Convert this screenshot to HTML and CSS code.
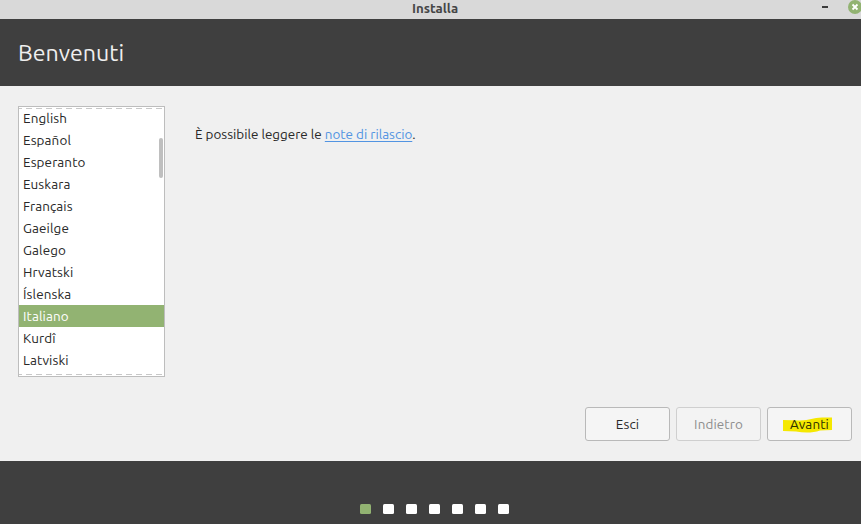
FILE: index.html
```html
<!DOCTYPE html>
<html lang="it">
<head>
<meta charset="utf-8">
<title>Installa</title>
<link rel="stylesheet" href="styles.css">
</head>
<body>
<div class="window">
  <div class="titlebar">
    <span class="title">Installa</span>
    <svg class="controls" width="44" height="19" viewBox="0 0 44 19">
      <rect x="5" y="6" width="6" height="2" fill="#3c3c3c"/>
      <circle cx="38" cy="7" r="7" fill="#92b372"/>
      <path d="M35.5 4.5l5 5M40.5 4.5l-5 5" stroke="#fff" stroke-width="1.8"/>
    </svg>
  </div>
  <header class="header"><h1><span>Benvenuti</span></h1></header>
  <main class="content">
    <div class="row">
      <div class="list">
        <ul>
          <li><span>English</span></li>
          <li><span>Español</span></li>
          <li><span>Esperanto</span></li>
          <li><span>Euskara</span></li>
          <li><span>Français</span></li>
          <li><span>Gaeilge</span></li>
          <li><span>Galego</span></li>
          <li><span>Hrvatski</span></li>
          <li><span>Íslenska</span></li>
          <li class="selected"><span>Italiano</span></li>
          <li><span>Kurdî</span></li>
          <li><span>Latviski</span></li>
        </ul>
        <i class="undershoot top"></i>
        <i class="undershoot bottom"></i>
        <i class="scrollbar"></i>
      </div>
      <p class="notes">È possibile leggere le <a href="#">note di rilascio</a>.</p>
    </div>
    <div class="actions">
      <button>Esci</button>
      <button disabled>Indietro</button>
      <button class="next">
        <svg class="marker" width="50" height="17" viewBox="0 0 50 17"><path d="M1 3L18 3.5C28 3.5 31 0.5 40 0.5H50V13L38 13.5C31 16 22 16 14 14.5L1 14Z" fill="#f5e800"/></svg>
        <span>Avanti</span>
      </button>
    </div>
  </main>
  <footer class="footer">
    <i class="dot current"></i><i class="dot"></i><i class="dot"></i><i class="dot"></i><i class="dot"></i><i class="dot"></i><i class="dot"></i>
  </footer>
</div>
</body>
</html>
```

FILE: styles.css
```css
* { box-sizing: border-box; }
body {
  margin: 0;
  font: 13.45px/22px "Ubuntu", "Noto Sans", sans-serif;
  color: #282828;
  background: #f0f0f0;
}
.window { width: 861px; height: 524px; display: flex; flex-direction: column; overflow: hidden; }
.titlebar {
  position: relative;
  flex: 0 0 19px;
  display: flex;
  justify-content: center;
  padding-left: 9px;
  background: #d9d9d9;
}
.title { font-size: 13.3px; font-weight: 600; line-height: 17px; color: #464646; }
.controls { position: absolute; right: 0; top: 0; }
.header {
  flex: 0 0 67px;
  display: flex;
  align-items: center;
  padding: 0 0 2px 18px;
  background: #3f3f3f;
}
h1 { margin: 0; font-size: 23.2px; line-height: 30px; font-weight: 400; color: #efefef; }
.content { flex: 0 0 375px; padding: 20px 9px 20px 18px; display: flex; flex-direction: column; justify-content: space-between; }
.row { display: flex; gap: 30px; }
.list {
  position: relative;
  width: 147px;
  height: 271px;
  border: 1px solid #bdbdbd;
  background: #fff;
}
ul { margin: 0; padding: 0; list-style: none; }
li { height: 22px; padding-left: 4px; letter-spacing: 0.12px; }
.selected { background: #92b372; color: #fff; }
.undershoot {
  position: absolute;
  left: 0;
  right: 0;
  height: 1px;
  background: repeating-linear-gradient(to right, #c8c8c8 0 3px, transparent 3px 7px, #c8c8c8 7px 10px);
}
.top { top: 1px; }
.bottom { bottom: 1px; }
.scrollbar { position: absolute; right: 1px; top: 31px; width: 4px; height: 40px; border-radius: 2px; background: #bfbfbf; }
.notes { margin: 17px 0 0; }
.notes a { color: #5294e2; text-underline-offset: 2px; }
.actions { display: flex; justify-content: flex-end; gap: 6px; }
button {
  position: relative;
  width: 85px;
  height: 34px;
  padding: 0;
  border: 1px solid #b9b9b9;
  border-radius: 3px;
  background: #f5f5f5;
  color: #282828;
  font: inherit;
  letter-spacing: 0.12px;
}
button:disabled { border-color: #cfcfcf; background: #f3f3f3; color: #8e8e8e; }
.next { color: #303000; }
.next span { position: relative; }
.marker { position: absolute; left: 14px; top: 9px; }
.footer {
  flex: 1;
  display: flex;
  justify-content: center;
  gap: 12px;
  padding: 43px 0 0 8px;
  background: #3f3f3f;
}
.dot { width: 11px; height: 10px; border-radius: 1.5px; background: #fff; }
.current { background: #92b372; }
```
